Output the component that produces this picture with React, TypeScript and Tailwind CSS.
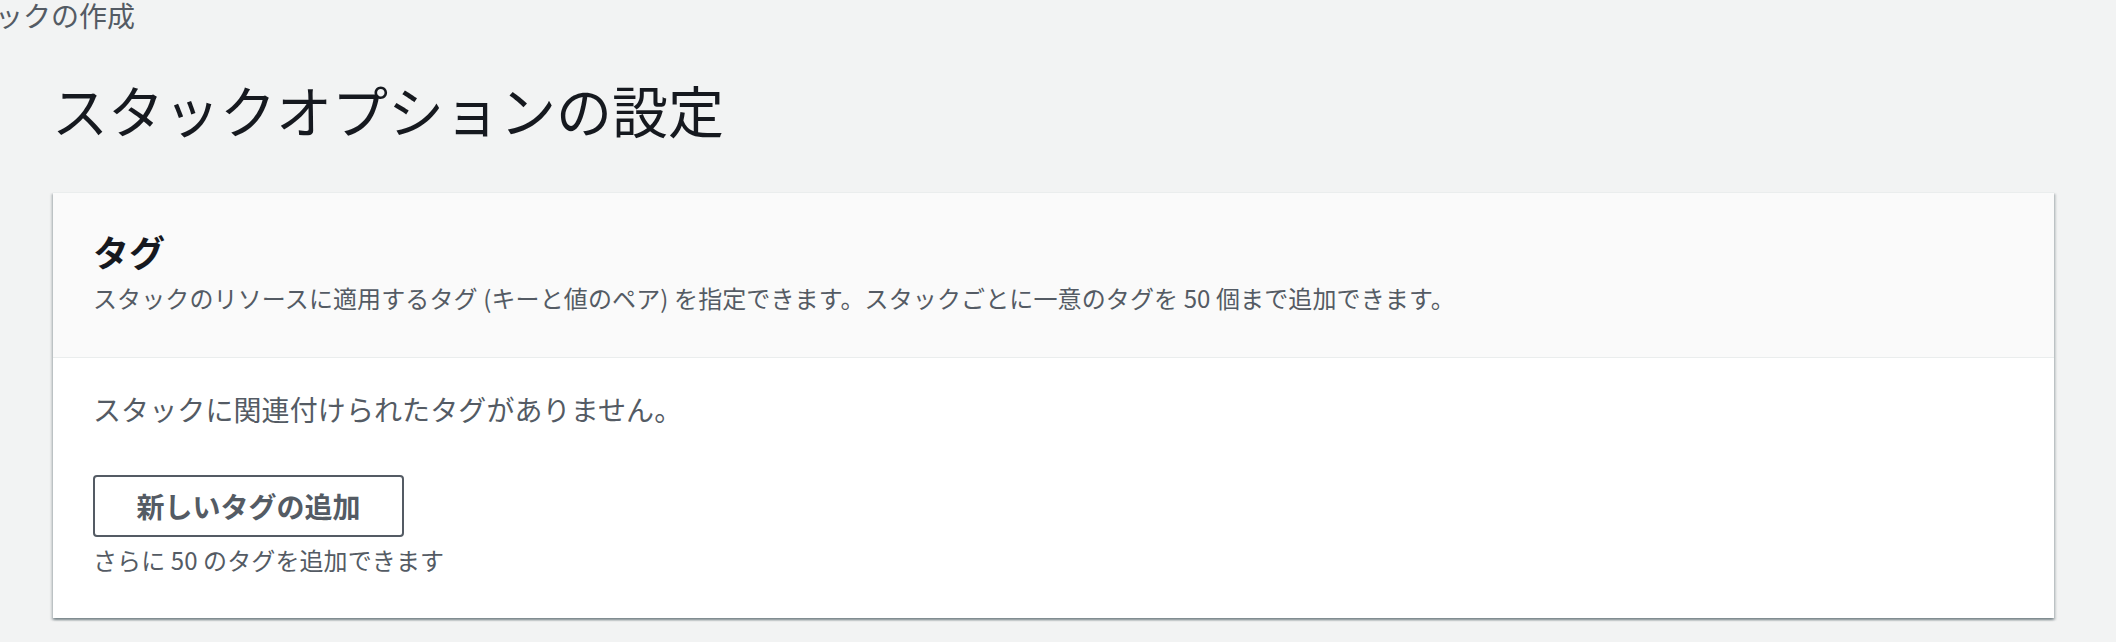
import React from 'react';

const FONT = "font-['Noto_Sans_CJK_JP','Noto_Sans',sans-serif]";

const TagsPanel = () => {
  return (
    <div className="ml-[53px] mt-[51px] w-[2001px] border-t border-[#eaeded] bg-white shadow-[0_2px_2px_0_rgba(0,28,36,0.3),2px_2px_2px_0_rgba(0,28,36,0.15),-2px_2px_2px_0_rgba(0,28,36,0.15)]">
      {/* header */}
      <div className="bg-[#fafafa] px-[40px] pt-[36px] pb-[43px] border-b border-[#eaeded]">
        <h2 className="text-[36px] leading-[44px] font-bold text-[#16191f]">タグ</h2>
        <p className="mt-[9px] text-[24px] leading-[32px] tracking-[0.12px] text-[#545b64]">
          スタックのリソースに適用するタグ (キーと値のペア) を指定できます。スタックごとに一意のタグを 50 個まで追加できます。
        </p>
      </div>

      {/* body */}
      <div className="px-[40px] pt-[33px] pb-[42px]">
        <p className="text-[28px] leading-[36px] tracking-[0.1px] text-[#545b64]">スタックに関連付けられたタグがありません。</p>
        <button className="mt-[48px] flex h-[62px] w-[311px] items-center justify-center rounded-[4px] border-2 border-[#545b64] bg-white text-[28px] font-bold text-[#545b64]">
          新しいタグの追加
        </button>
        <p className="mt-[7px] text-[24px] leading-[32px] tracking-[0.1px] text-[#545b64]">さらに 50 のタグを追加できます</p>
      </div>
    </div>
  );
};

export default function App() {
  return (
    <div className={`min-h-screen w-full overflow-hidden bg-[#f2f3f3] ${FONT}`}>
      <div className="ml-[-61px] whitespace-nowrap text-[28px] leading-[31px] text-[#545b64]">スタックの作成</div>

      <h1 className="ml-[52px] mt-[46px] text-[56px] leading-[64px] font-normal text-[#16191f]">スタックオプションの設定</h1>

      <TagsPanel />
    </div>
  );
}
